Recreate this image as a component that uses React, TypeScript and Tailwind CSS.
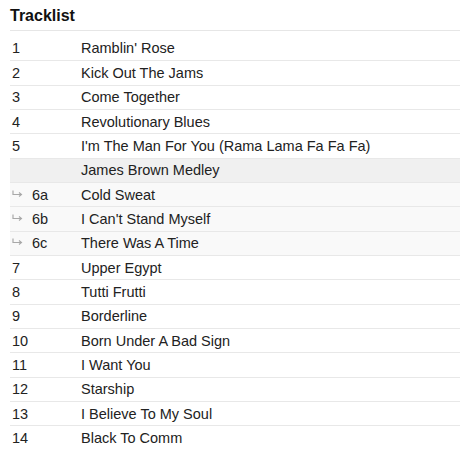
const tracks: { n: string; title: string; kind?: "medley" | "sub" }[] = [
  { n: "1", title: "Ramblin' Rose" },
  { n: "2", title: "Kick Out The Jams" },
  { n: "3", title: "Come Together" },
  { n: "4", title: "Revolutionary Blues" },
  { n: "5", title: "I'm The Man For You (Rama Lama Fa Fa Fa)" },
  { n: "", title: "James Brown Medley", kind: "medley" },
  { n: "6a", title: "Cold Sweat", kind: "sub" },
  { n: "6b", title: "I Can't Stand Myself", kind: "sub" },
  { n: "6c", title: "There Was A Time", kind: "sub" },
  { n: "7", title: "Upper Egypt" },
  { n: "8", title: "Tutti Frutti" },
  { n: "9", title: "Borderline" },
  { n: "10", title: "Born Under A Bad Sign" },
  { n: "11", title: "I Want You" },
  { n: "12", title: "Starship" },
  { n: "13", title: "I Believe To My Soul" },
  { n: "14", title: "Black To Comm" },
];

function SubArrow() {
  return (
    <svg width="11" height="7" viewBox="0 0 11 7" className="mb-[3px] mr-[9px]" fill="none">
      <path d="M1 0.5V4.5H9" stroke="#a8a8a8" strokeWidth="1.2" />
      <path d="M7 2.5L9.5 4.5L7 6.5" stroke="#a8a8a8" strokeWidth="1.1" />
    </svg>
  );
}

export default function App() {
  return (
    <div className="h-[460px] w-[460px] bg-white pl-[10px] font-['Liberation_Sans',Arial,sans-serif] text-[#222]">
      <h2 className="border-b border-[#e6e6e6] pt-[7px] pb-[5px] text-[16px] font-bold leading-[18px] text-[#111]">
        Tracklist
      </h2>
      <div className="mt-[5px]">
        {tracks.map((t, i) => (
          <div
            key={i}
            className={
              "flex h-[24.34px] items-center text-[14.5px] leading-[18px] " +
              (i > 0 ? "border-t border-[#e8e8e8] " : "") +
              (t.kind === "medley" ? "bg-[#f0f0f0]" : t.kind === "sub" ? "bg-[#f9f9f9]" : "")
            }
          >
            <div className="flex w-[71px] shrink-0 items-center pl-[2px]">
              {t.kind === "sub" && <SubArrow />}
              <span>{t.n}</span>
            </div>
            <div>{t.title}</div>
          </div>
        ))}
      </div>
    </div>
  );
}
